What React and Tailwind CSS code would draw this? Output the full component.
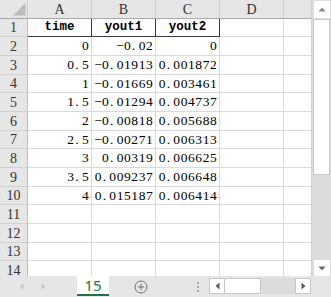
import React from "react";

const data = [
  ["0", "-0.02", "0"],
  ["0.5", "-0.01913", "0.001872"],
  ["1", "-0.01669", "0.003461"],
  ["1.5", "-0.01294", "0.004737"],
  ["2", "-0.00818", "0.005688"],
  ["2.5", "-0.00271", "0.006313"],
  ["3", "0.00319", "0.006625"],
  ["3.5", "0.009237", "0.006648"],
  ["4", "0.015187", "0.006414"],
];

const serif = { fontFamily: '"Liberation Serif", serif' };
const mono = { fontFamily: '"Liberation Mono", monospace' };

function Chars({ text }) {
  return (
    <span className="inline-flex">
      {text.split("").map((ch, i) => (
        <span
          key={i}
          className={
            "inline-block w-[7.33px] " +
            (ch === "." ? "text-left pl-[1px]" : "text-center")
          }
        >
          {ch === "-" ? "\u2212" : ch}
        </span>
      ))}
    </span>
  );
}

function RowHead({ n }) {
  return (
    <div
      className="w-[28px] shrink-0 h-full bg-[#e6e6e6] border-r border-b border-r-[#bdbdbd] border-b-[#d2d2d2] flex items-end justify-center pb-[1px] text-[14px] leading-none text-[#333]"
      style={serif}
    >
      {n}
    </div>
  );
}

function Cell({ text, right, dark }) {
  return (
    <div
      className={
        "w-[64px] shrink-0 h-full border-r border-b flex items-end pb-[2px] text-[13.5px] leading-none text-black whitespace-nowrap " +
        (right ? "justify-end pr-[2px] " : "justify-center ") +
        (dark ? "border-[#3c3c3c] " : "border-[#dadada] ")
      }
      style={serif}
    >
      {text ? <Chars text={text} /> : null}
    </div>
  );
}

function HeadCell({ text }) {
  return (
    <div
      className="w-[64px] shrink-0 h-full border-r border-b border-[#3c3c3c] flex items-end justify-center pb-[3px] text-[12.5px] leading-none font-bold text-black whitespace-nowrap"
      style={mono}
    >
      {text}
    </div>
  );
}

function Row({ n, children }) {
  return (
    <div className="flex h-[18.67px] shrink-0">
      <RowHead n={n} />
      {children}
    </div>
  );
}

export default function App() {
  const emptyRows = [11, 12, 13, 14];
  return (
    <div className="w-[331px] h-[297px] flex flex-col overflow-hidden bg-white">
      <div className="flex h-[276px] shrink-0">
        <div className="w-[311px] h-full overflow-hidden flex flex-col">
          <div className="flex h-[18.67px] shrink-0 bg-[#e6e6e6] border-b border-[#a8a8a8]">
            <div className="w-[28px] shrink-0 h-full relative border-r border-[#d0d0d0]">
              <svg className="absolute left-0 top-0" width="28" height="18" viewBox="0 0 28 18">
                <polygon points="13,15.5 25.5,15.5 25.5,3" fill="#bcbcbc" />
              </svg>
            </div>
            {["A", "B", "C", "D"].map((c) => (
              <div
                key={c}
                className="w-[64px] shrink-0 h-full border-r border-[#d0d0d0] flex items-end justify-center pb-[1px] text-[14px] leading-none text-[#333]"
                style={serif}
              >
                {c}
              </div>
            ))}
            <div className="w-[27px] shrink-0 h-full" />
          </div>
          <Row n={1}>
            <HeadCell text="time" />
            <HeadCell text="yout1" />
            <HeadCell text="yout2" />
            <Cell />
            <div className="w-[27px] shrink-0 h-full border-b border-[#dadada]" />
          </Row>
          {data.map((r, i) => (
            <Row key={i} n={i + 2}>
              <Cell right text={r[0]} />
              <Cell right text={r[1]} />
              <Cell right text={r[2]} />
              <Cell />
              <div className="w-[27px] shrink-0 h-full border-b border-[#dadada]" />
            </Row>
          ))}
          {emptyRows.map((n) => (
            <Row key={n} n={n}>
              <Cell />
              <Cell />
              <Cell />
              <Cell />
              <div className="w-[27px] shrink-0 h-full border-b border-[#dadada]" />
            </Row>
          ))}
        </div>
        <div className="w-[20px] h-full bg-[#dcdcdc] flex flex-col items-center border-l border-[#d0d0d0]">
          <div className="w-[16px] h-[17px] mt-[1px] bg-white flex items-center justify-center">
            <svg width="8" height="5" viewBox="0 0 8 5">
              <polygon points="0.5,4.5 7.5,4.5 4,0.5" fill="#8a8a8a" />
            </svg>
          </div>
          <div className="w-[17px] h-[156px] mt-[1px] bg-white border border-[#c8c8c8]" />
          <div className="flex-1" />
          <div className="w-[16px] h-[16px] bg-white flex items-center justify-center">
            <svg width="8" height="5" viewBox="0 0 8 5">
              <polygon points="0.5,0.5 7.5,0.5 4,4.5" fill="#6a6a6a" />
            </svg>
          </div>
        </div>
      </div>
      <div className="flex h-[21px] shrink-0 bg-[#e6e6e6] items-stretch">
        <div className="w-[77px] shrink-0 flex items-center">
          <svg className="ml-[19px]" width="5" height="7" viewBox="0 0 5 7">
            <polygon points="4.5,0.5 4.5,6.5 0.5,3.5" fill="#c4c4c4" />
          </svg>
          <svg className="ml-[17px]" width="5" height="7" viewBox="0 0 5 7">
            <polygon points="0.5,0.5 0.5,6.5 4.5,3.5" fill="#c4c4c4" />
          </svg>
        </div>
        <div
          className="w-[32px] shrink-0 h-[20px] bg-white border-b-2 border-[#217346] flex items-center justify-center text-[15px] leading-none text-[#217346]"
          style={{ fontFamily: '"Noto Sans", sans-serif' }}
        >
          15
        </div>
        <div className="w-[100px] shrink-0 flex items-center">
          <svg className="ml-[25px]" width="14" height="14" viewBox="0 0 14 14">
            <circle cx="7" cy="7" r="6" fill="none" stroke="#6e6e6e" strokeWidth="1" />
            <line x1="3.8" y1="7" x2="10.2" y2="7" stroke="#6e6e6e" strokeWidth="1" />
            <line x1="7" y1="3.8" x2="7" y2="10.2" stroke="#6e6e6e" strokeWidth="1" />
          </svg>
          <div className="ml-[49px] flex flex-col gap-[2px]">
            <div className="w-[2px] h-[2px] bg-[#a8a8a8]" />
            <div className="w-[2px] h-[2px] bg-[#a8a8a8]" />
            <div className="w-[2px] h-[2px] bg-[#a8a8a8]" />
          </div>
        </div>
        <div className="flex items-start pt-[2px]">
          <div className="w-[16px] h-[16px] bg-white border border-[#c8c8c8] flex items-center justify-center">
            <svg width="5" height="8" viewBox="0 0 5 8">
              <polygon points="4.5,0.5 4.5,7.5 0.5,4" fill="#5a5a5a" />
            </svg>
          </div>
          <div className="w-[36px] h-[16px] bg-white border border-[#c8c8c8] border-l-0" />
          <div className="w-[34px] h-[16px] bg-[#dcdcdc]" />
          <div className="w-[16px] h-[16px] bg-white border border-[#c8c8c8] flex items-center justify-center">
            <svg width="5" height="8" viewBox="0 0 5 8">
              <polygon points="0.5,0.5 0.5,7.5 4.5,4" fill="#5a5a5a" />
            </svg>
          </div>
        </div>
      </div>
    </div>
  );
}
